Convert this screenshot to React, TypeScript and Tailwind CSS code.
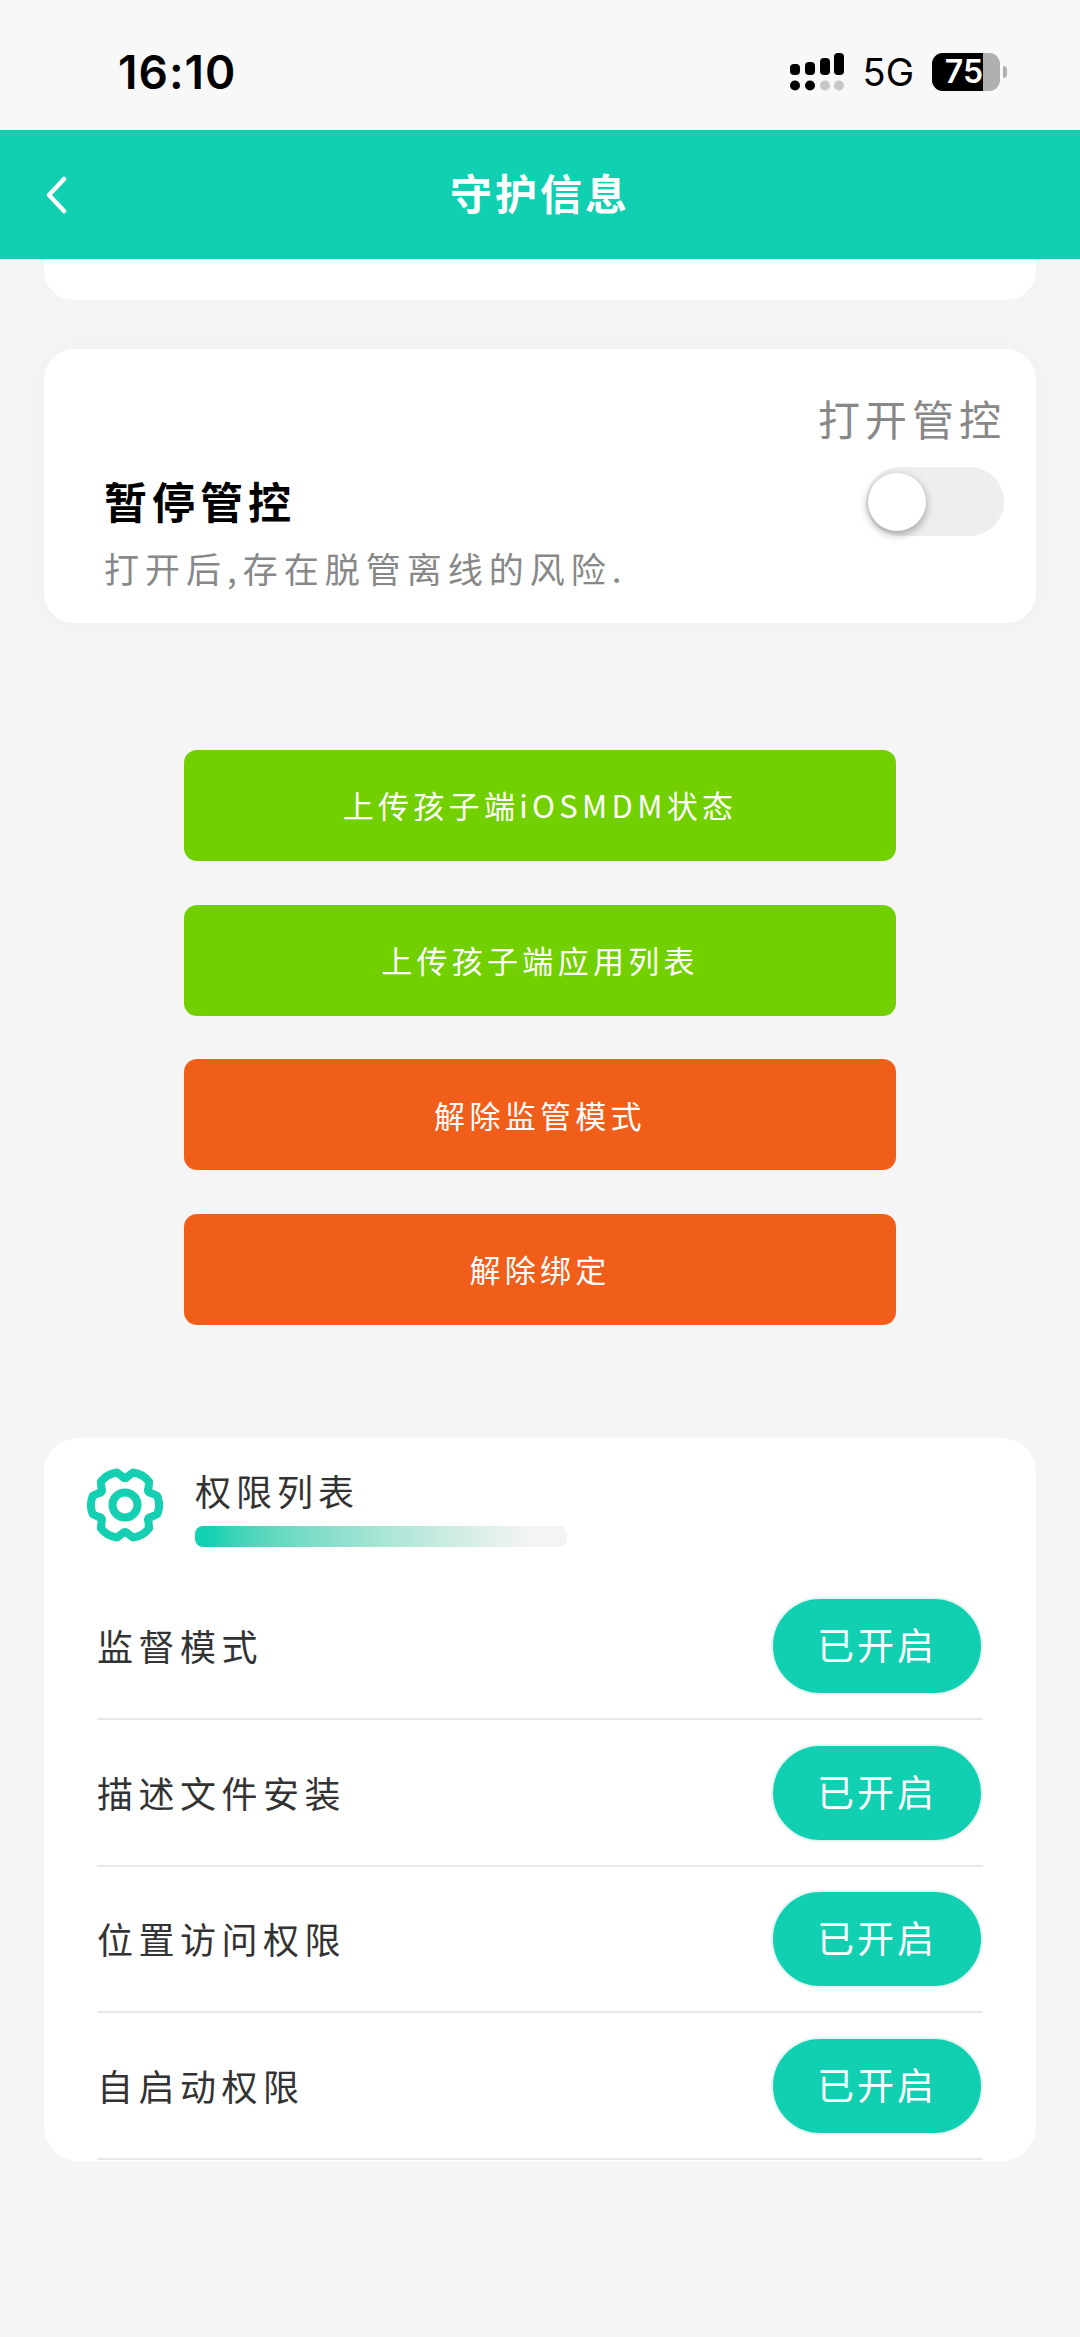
import React from 'react';

const rows = ['监督模式', '描述文件安装', '位置访问权限', '自启动权限'];

const actions = [
  { label: '上传孩子端iOSMDM状态', color: 'bg-[#72cf00]' },
  { label: '上传孩子端应用列表', color: 'bg-[#72cf00]' },
  { label: '解除监管模式', color: 'bg-[#f05e1a]' },
  { label: '解除绑定', color: 'bg-[#f05e1a]' },
];

// cog outline: six lobes, notches at top and bottom
const polar = (deg: number, r: number) => {
  const a = (deg * Math.PI) / 180;
  return `${(38 + r * Math.cos(a)).toFixed(1)} ${(37 + r * Math.sin(a)).toFixed(1)}`;
};
const cogPath = () => {
  let d = `M${polar(-16, 33.5)}`;
  for (let i = 0; i < 6; i++) {
    const a = i * 60;
    d += ` Q${polar(a, 36)} ${polar(a + 16, 33.5)}`;
    d += ` L${polar(a + 24, 29)} Q${polar(a + 30, 25)} ${polar(a + 36, 29)} L${polar(a + 44, 33.5)}`;
  }
  return d + 'Z';
};

const SignalIcon = () => (
  <svg width="54" height="38" viewBox="0 0 54 38">
    <rect x="0" y="11" width="10" height="11" rx="4" fill="#000" />
    <rect x="15" y="9" width="10" height="13" rx="4" fill="#000" />
    <rect x="30" y="5" width="10" height="17" rx="4" fill="#000" />
    <rect x="44" y="0" width="10" height="22" rx="4" fill="#000" />
    <circle cx="5" cy="32.5" r="5" fill="#000" />
    <circle cx="20" cy="32.5" r="5" fill="#000" />
    <circle cx="35" cy="32.5" r="5" fill="#c8c8c8" />
    <circle cx="49" cy="32.5" r="5" fill="#c8c8c8" />
  </svg>
);

const StatusBar = () => (
  <div className="h-[130px] bg-[#f8f8f8] flex items-start justify-between pl-[118px] pr-[73px] pt-[50px]">
    <span className="text-[46px] leading-[44px] font-semibold tracking-[1px] text-black font-['Inter',sans-serif]">16:10</span>
    <div className="flex items-center mt-[3px]">
      <SignalIcon />
      <span className="ml-[19px] text-[38px] leading-[38px] text-black font-['Inter',sans-serif]">5G</span>
      <div className="ml-[18px] w-[68px] h-[38px] rounded-[11px] overflow-hidden flex bg-[#b0b0b0]">
        <div className="w-[51px] h-full bg-black flex items-center justify-end">
          <span className="text-[32px] leading-none font-semibold text-white font-['Inter',sans-serif]">75</span>
        </div>
      </div>
      <div className="ml-[3px] w-[4px] h-[12px] rounded-r-full bg-[#b0b0b0]" />
    </div>
  </div>
);

const Header = () => (
  <div className="h-[129px] bg-[#11cfb1] flex items-center justify-center relative">
    <svg className="absolute left-[44px] top-[46px]" width="24" height="38" viewBox="0 0 24 38" fill="none">
      <path d="M20 3 L5 19 L20 35" stroke="#ffffff" strokeWidth="4.5" strokeLinecap="round" strokeLinejoin="round" />
    </svg>
    <span className="-mt-[7px] text-[42px] font-bold tracking-[3px] text-white">守护信息</span>
  </div>
);

const PauseCard = () => (
  <div className="mt-[49px] h-[274px] bg-white rounded-[30px] shadow-[0_0_24px_rgba(0,0,0,0.03)] pt-[39px]">
    <div className="h-[60px] leading-[60px] pr-[30px] text-right text-[42px] tracking-[5px] text-[#888888]">打开管控</div>
    <div className="mt-[19px] flex items-start justify-between pl-[60px] pr-[32px]">
      <div>
        <div className="mt-[3px] h-[60px] leading-[60px] text-[43px] font-bold tracking-[5px] text-black">暂停管控</div>
        <div className="mt-[16px] h-[44px] leading-[44px] text-[35px] tracking-[6px] text-[#888888]">打开后,存在脱管离线的风险.</div>
      </div>
      <div className="w-[138px] h-[69px] rounded-full bg-[#eeeeee] flex items-center pl-[2px]">
        <div className="w-[58px] h-[58px] rounded-full bg-white shadow-[0_3px_8px_rgba(0,0,0,0.35)]" />
      </div>
    </div>
  </div>
);

const PermissionCard = () => (
  <div className="mt-[113px] h-[723px] bg-white rounded-[34px] pt-[30px]">
    <div className="flex items-start pl-[43px]">
      <svg width="76" height="74" viewBox="0 0 76 74" fill="none" stroke="#14cfb2" strokeWidth="8">
        <path d={cogPath()} strokeLinejoin="round" />
        <circle cx="38" cy="37" r="12.5" />
      </svg>
      <div className="ml-[32px]">
        <div className="h-[44px] leading-[44px] text-[36px] tracking-[5px] text-[#333333]">权限列表</div>
        <div className="mt-[14px] w-[372px] h-[21px] rounded-[8px] bg-gradient-to-r from-[#14d1b4] from-5% to-[#f4f4f4] to-90%" />
      </div>
    </div>
    <div className="mt-[27px] ml-[53px] w-[886px]">
      {rows.map((label) => (
        <div key={label} className="h-[146.5px] border-b-2 border-[#e8e8e8] flex items-center justify-between">
          <span className="-mt-[2px] text-[36px] tracking-[5.5px] text-[#333333]">{label}</span>
          <div className="w-[212px] h-[98px] rounded-full bg-[#11cfb1] border-2 border-[#e6f5f2] flex items-center justify-center">
            <span className="-mt-[2px] text-[37px] tracking-[3px] text-white">已开启</span>
          </div>
        </div>
      ))}
    </div>
  </div>
);

export default function App() {
  return (
    <div className="w-[1080px] h-[2337px] overflow-hidden bg-[#f5f5f5] font-['Noto_Sans_CJK_SC','Noto_Sans',sans-serif]">
      <StatusBar />
      <Header />
      <div className="px-[44px]">
        <div className="h-[41px] bg-white rounded-b-[30px]" />
        <PauseCard />
        <div className="mt-[127px] mx-[140px] flex flex-col gap-[43.67px]">
          {actions.map((a) => (
            <div key={a.label} className={`h-[111px] rounded-[13px] flex items-center justify-center text-[31px] tracking-[4.3px] text-white ${a.color}`}>
              {a.label}
            </div>
          ))}
        </div>
        <PermissionCard />
      </div>
    </div>
  );
}
